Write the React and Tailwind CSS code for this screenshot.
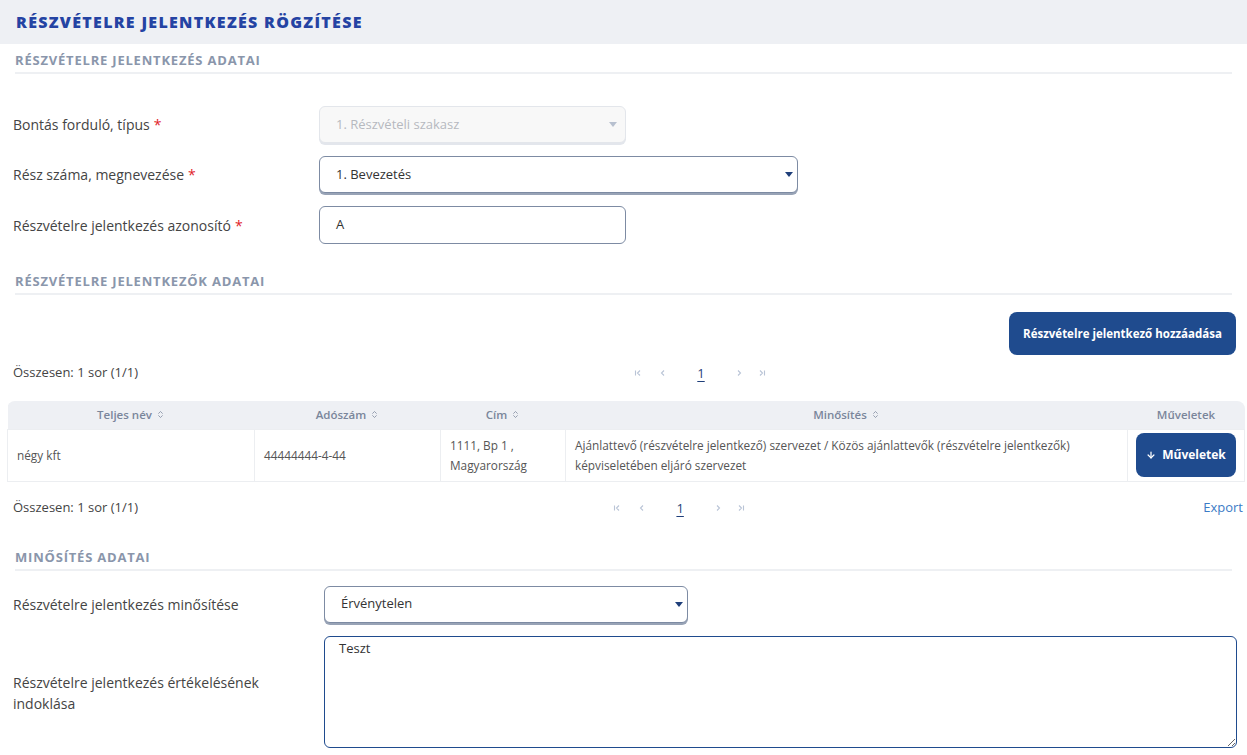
import { ChevronsUpDown, ArrowDown } from 'lucide-react'

const FONT = { fontFamily: '"Open Sans", "Liberation Sans", sans-serif' }

function SectionTitle({ children }) {
  return (
    <div className="mx-[15px] border-b-2 border-[#eef0f3] pb-[4px]">
      <h2 className="text-[13px] font-bold uppercase leading-[15px] tracking-[0.8px] text-[#8a96ab]">{children}</h2>
    </div>
  )
}

function Caret({ light }) {
  return (
    <svg width="8" height="5" viewBox="0 0 8 5" className={light ? 'text-[#b7c0cf]' : 'text-[#1f3f7a]'}>
      <path d="M0 0h8L4 5z" fill="currentColor" />
    </svg>
  )
}

function Label({ children, req }) {
  return (
    <div className="text-[14px] text-[#444]">
      {children}
      {req && <span className="ml-1 text-[#e11d2a]">*</span>}
    </div>
  )
}

function PgIcon({ d }) {
  return (
    <svg width="8" height="8" viewBox="0 0 8 8" fill="none" stroke="#b9c4d6" strokeWidth="1.1">
      <path d={d} />
    </svg>
  )
}

function Pager() {
  return (
    <div className="flex items-center">
      <PgIcon d="M1.5 1.5v5M6 1.5L3.5 4 6 6.5" />
      <span className="ml-[17px]"><PgIcon d="M5 1.5L2.5 4 5 6.5" /></span>
      <span className="ml-[30px] text-[13px] leading-[16px] text-[#1f3f7a] underline underline-offset-3">1</span>
      <span className="ml-[30px]"><PgIcon d="M3 1.5L5.5 4 3 6.5" /></span>
      <span className="ml-[15px]"><PgIcon d="M2 1.5L4.5 4 2 6.5M6.5 1.5v5" /></span>
    </div>
  )
}

function Th({ children, sort, className = '' }) {
  return (
    <th className={`h-[28px] text-center text-[11.5px] font-semibold text-[#7a869b] ${className}`}>
      <span className="inline-flex items-center gap-1">
        {children}
        {sort && <ChevronsUpDown size={9} strokeWidth={2} />}
      </span>
    </th>
  )
}

export default function App() {
  return (
    <div className="min-h-screen w-[1247px] bg-white" style={FONT}>
      <div className="flex h-[44px] items-center bg-[#eef0f4] px-4">
        <h1 className="text-[16px] font-extrabold uppercase tracking-[1.3px] text-[#2443a3]">Részvételre jelentkezés rögzítése</h1>
      </div>

      <div className="pt-[9px]">
        <SectionTitle>Részvételre jelentkezés adatai</SectionTitle>

        <div className="mt-[32px] flex flex-col gap-[13px] pl-[13px]">
          <div className="flex items-center">
            <div className="w-[306px]"><Label req>Bontás forduló, típus</Label></div>
            <div className="flex h-[37px] w-[307px] items-center justify-between rounded-md border border-[#e3e6eb] bg-[#f8f8f8] pl-4 pr-2 shadow-[0_2px_0_#e3e6ec]">
              <span className="text-[13px] text-[#b6b9bf]">1. Részvételi szakasz</span>
              <Caret light />
            </div>
          </div>
          <div className="flex items-center">
            <div className="w-[306px]"><Label req>Rész száma, megnevezése</Label></div>
            <div className="flex h-[37px] w-[479px] items-center justify-between rounded-md border border-[#7d8ba3] bg-white pl-4 pr-1 shadow-[0_2px_0_#98a3b6]">
              <span className="text-[13px] text-[#333]">1. Bevezetés</span>
              <Caret />
            </div>
          </div>
          <div className="flex items-center">
            <div className="w-[306px]"><Label req>Részvételre jelentkezés azonosító</Label></div>
            <div className="flex h-[38px] w-[307px] items-center rounded-md border border-[#7d8ba3] bg-white pl-4">
              <span className="text-[13px] text-[#333]">A</span>
            </div>
          </div>
        </div>

        <div className="mt-[30px]">
          <SectionTitle>Részvételre jelentkezők adatai</SectionTitle>
        </div>

        <div className="mt-[17px] flex justify-end pr-[11px]">
          <button className="h-[43px] w-[227px] rounded-lg bg-[#1f4b8e] text-[11.5px] font-bold text-white">
            Részvételre jelentkező hozzáadása
          </button>
        </div>

        <div className="mt-[8px] flex h-[20px] items-center pl-[13px]">
          <span className="w-[120px] whitespace-nowrap text-[13px] text-[#444]">Összesen: 1 sor (1/1)</span>
          <div className="flex flex-1 justify-center pl-[20px]"><Pager /></div>
        </div>

        <div className="ml-[7px] mr-[2px] mt-[18px] overflow-hidden rounded-t-lg">
          <table className="w-full border-collapse">
            <thead className="bg-[#eef0f4]">
              <tr>
                <Th sort className="w-[247px]">Teljes név</Th>
                <Th sort className="w-[186px]">Adószám</Th>
                <Th sort className="w-[125px]">Cím</Th>
                <Th sort>Minősítés</Th>
                <Th className="w-[117px]">Műveletek</Th>
              </tr>
            </thead>
            <tbody>
              <tr className="text-[11.8px] leading-[20px] text-[#555]">
                <td className="border border-[#eceef1] px-[9px]">négy kft</td>
                <td className="border border-[#eceef1] px-[9px]">44444444-4-44</td>
                <td className="border border-[#eceef1] px-[9px]">1111, Bp 1 ,<br />Magyarország</td>
                <td className="border border-[#eceef1] px-[9px]">
                  Ajánlattevő (részvételre jelentkező) szervezet / Közös ajánlattevők (részvételre jelentkezők)<br />
                  képviseletében eljáró szervezet
                </td>
                <td className="h-[52px] border border-[#eceef1] px-[8px]">
                  <button className="flex h-[44px] w-[100px] items-center justify-center gap-[6px] rounded-lg bg-[#1f4b8e] text-[12px] font-bold text-white">
                    <ArrowDown size={10} strokeWidth={3} />
                    Műveletek
                  </button>
                </td>
              </tr>
            </tbody>
          </table>
        </div>

        <div className="mt-[16px] flex h-[20px] items-center pl-[13px] pr-[4px]">
          <span className="w-[120px] whitespace-nowrap text-[13px] text-[#444]">Összesen: 1 sor (1/1)</span>
          <div className="flex flex-1 justify-center pl-[22px]"><Pager /></div>
          <span className="text-[13px] text-[#3b7bc6]">Export</span>
        </div>

        <div className="mt-[32px]">
          <SectionTitle>Minősítés adatai</SectionTitle>
        </div>

        <div className="mt-[15px] flex items-center pl-[13px]">
          <div className="w-[311px]"><Label>Részvételre jelentkezés minősítése</Label></div>
          <div className="flex h-[37px] w-[364px] items-center justify-between rounded-md border border-[#7d8ba3] bg-white pl-4 pr-1 shadow-[0_2px_0_#98a3b6]">
            <span className="text-[13px] text-[#333]">Érvénytelen</span>
            <Caret />
          </div>
        </div>

        <div className="mt-[13px] flex items-center pl-[13px] pr-[10px]">
          <div className="w-[311px] pt-[3px] text-[14px] leading-[21px] text-[#444]">
            Részvételre jelentkezés értékelésének<br />indoklása
          </div>
          <textarea
            defaultValue="Teszt"
            className="h-[112px] flex-1 resize-y rounded-md border border-[#1f4b8e] px-[14px] py-[2px] text-[13px] text-[#333] outline-none"
            style={FONT}
          />
        </div>
      </div>
    </div>
  )
}
